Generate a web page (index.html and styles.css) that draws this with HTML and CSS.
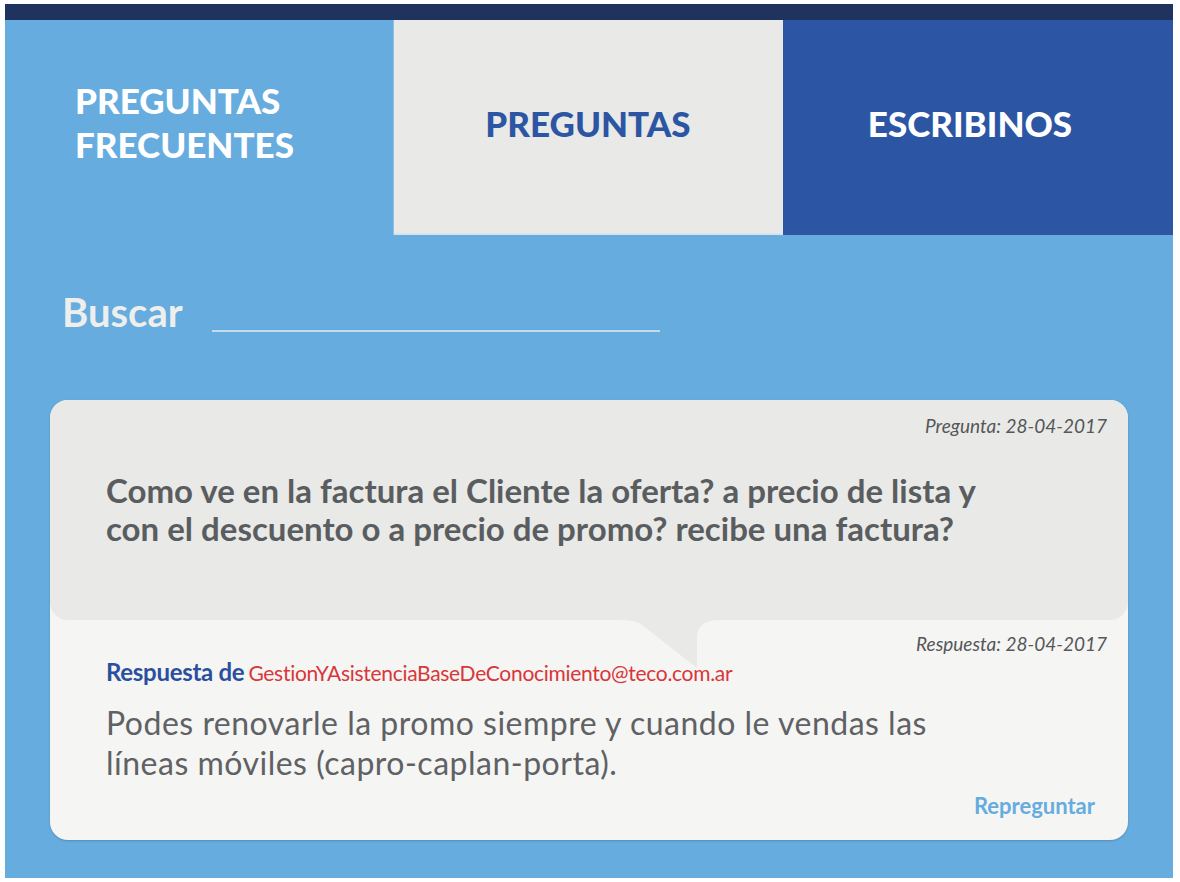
FILE: index.html
```html
<!DOCTYPE html>
<html lang="es">
<head>
<meta charset="utf-8">
<title>Preguntas frecuentes</title>
<link rel="stylesheet" href="styles.css">
</head>
<body>
<div class="page">
  <div class="topbar"></div>
  <nav class="tabs">
    <div class="tab tab-faq">PREGUNTAS<br>FRECUENTES</div>
    <div class="tab tab-questions">PREGUNTAS</div>
    <div class="tab tab-write">ESCRIBINOS</div>
  </nav>
  <main class="main">
    <div class="search">
      <span class="search-label">Buscar</span>
      <div class="search-line"></div>
    </div>
    <section class="card">
      <div class="question">
        <div class="date">Pregunta: 28-04-2017</div>
        <p class="question-text">Como ve en la factura el Cliente la oferta? a precio de lista y con el descuento o a precio de promo? recibe una factura?</p>
        <div class="tail"></div>
      </div>
      <div class="answer">
        <div class="date">Respuesta: 28-04-2017</div>
        <div class="author"><span class="author-label">Respuesta de</span> <span class="author-mail">GestionYAsistenciaBaseDeConocimiento@teco.com.ar</span></div>
        <p class="answer-text">Podes renovarle la promo siempre y cuando le vendas las líneas móviles (capro-caplan-porta).</p>
        <div class="actions"><a class="reask">Repreguntar</a></div>
      </div>
    </section>
  </main>
</div>
</body>
</html>
```
FILE: styles.css
```css
* { box-sizing: border-box; }
html, body { margin: 0; padding: 0; background: #ffffff; }
body { font-family: Lato, "Open Sans", Arial, sans-serif; }

.page {
  width: 1168px;
  margin: 4px 0 0 5px;
}

.topbar {
  height: 16px;
  background: #20335f;
}

.tabs {
  display: grid;
  grid-template-columns: 388px 390px 390px;
  height: 215px;
}

.tab {
  display: flex;
  align-items: center;
  font-weight: 900;
  font-size: 35px;
  line-height: 44px;
}

.tab-faq {
  background: #66acdf;
  color: #ffffff;
  padding-left: 70px;
  padding-bottom: 12px;
}

.tab-questions {
  background: #e9e9e7;
  color: #2c55a3;
  justify-content: center;
  padding-bottom: 10px;
  box-shadow: inset 1px 0 0 #8fc2ea, inset 0 -2px 0 #d9e3ec;
}

.tab-write {
  background: #2c55a3;
  color: #ffffff;
  justify-content: center;
  padding-bottom: 10px;
  padding-right: 16px;
}

.main {
  background: #66acdf;
  height: 643px;
  padding: 0 45px;
}

.search {
  display: flex;
  align-items: flex-end;
  gap: 29px;
  height: 97px;
  padding-left: 12px;
}

.search-label {
  font-size: 40px;
  line-height: 40px;
  font-weight: 700;
  color: #eeeeec;
}

.search-line {
  width: 448px;
  height: 2px;
  background: #c3dbee;
}

.card {
  margin-top: 68px;
  width: 1078px;
  background: #f5f5f3;
  border-radius: 18px;
  box-shadow: 0 1px 2px rgba(0, 0, 0, 0.18);
}

.question {
  position: relative;
  height: 220px;
  background: #e9e9e7;
  border-radius: 18px;
  padding: 16px 21px 0 56px;
}

.date {
  text-align: right;
  font-style: italic;
  font-size: 19px;
  line-height: 20px;
  color: #555759;
}

.question-text {
  margin: 35px 0 0;
  width: 920px;
  font-size: 33px;
  line-height: 38px;
  font-weight: 700;
  color: #5a5d60;
}

.tail {
  position: absolute;
  left: 570px;
  top: 216px;
  width: 100px;
  height: 56px;
  background: #e9e9e7;
  clip-path: path("M0 0 L100 0 L100 4 Q78 4 77 20 L77 52 L22 9 Q16 4 0 4 Z");
}

.answer {
  padding: 14px 21px 22px 56px;
}

.author {
  margin-top: 5px;
  line-height: 26px;
}

.author-label {
  font-size: 24px;
  font-weight: 700;
  color: #2a4f9e;
  letter-spacing: -0.3px;
}

.author-mail {
  font-size: 21px;
  color: #d8373a;
  letter-spacing: -0.3px;
}

.answer-text {
  margin: 15px 0 0;
  width: 860px;
  font-size: 32px;
  line-height: 40px;
  letter-spacing: 0.5px;
  color: #5f6164;
}

.actions {
  margin-top: 11px;
  display: flex;
  justify-content: flex-end;
  padding-right: 12px;
}

.reask {
  font-size: 22px;
  line-height: 24px;
  font-weight: 700;
  color: #66acdf;
}
```
